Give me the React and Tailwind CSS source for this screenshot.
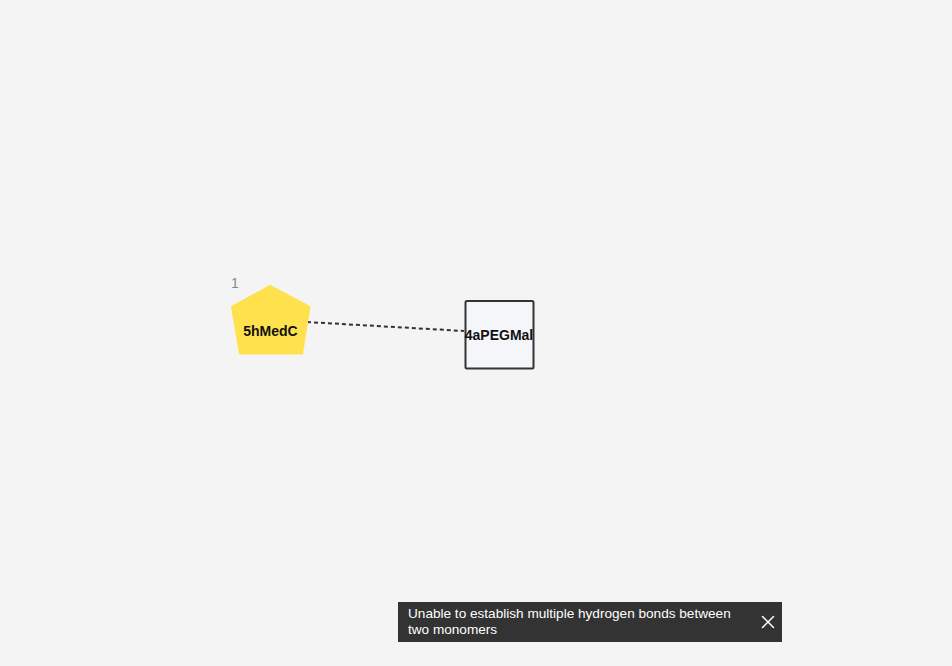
import React from "react";
import { X } from "lucide-react";

export default function App() {
  return (
    <div className="relative w-[952px] h-[666px] bg-[#f4f4f4] overflow-hidden font-[Liberation_Sans,Arial,sans-serif]">
      {/* canvas */}
      <svg className="absolute inset-0" width="952" height="666">
        <line x1="307" y1="322" x2="464" y2="331" stroke="#333" strokeWidth="2" strokeDasharray="4 3" />
        <text x="231" y="288" fontSize="14" fill="#888888" fontFamily="Liberation Sans, Arial, sans-serif">1</text>
        <path
          d="M270 286 L309.5 307 L302 353.5 L240 353.5 L232 307 Z"
          fill="#ffe14d"
          stroke="#ffe14d"
          strokeWidth="2"
          strokeLinejoin="round"
        />
        <text x="270.5" y="336" textAnchor="middle" fontSize="14" fontWeight="bold" fill="#111" fontFamily="Liberation Sans, Arial, sans-serif">5hMedC</text>
        <rect x="465.5" y="301" width="68" height="67.5" rx="1.5" fill="#f5f6fa" stroke="#333" strokeWidth="2" />
        <text x="499" y="340" textAnchor="middle" fontSize="14" fontWeight="bold" fill="#111" fontFamily="Liberation Sans, Arial, sans-serif">4aPEGMal</text>
      </svg>

      {/* toast */}
      <div className="absolute left-[398px] top-[602px] w-[384px] h-[40px] bg-[#333333] flex items-center pl-[10px] pr-[3px]">
        <p className="flex-1 text-white text-[13.6px] leading-[16px] pr-4 font-[Liberation_Sans,Arial,sans-serif]">
          Unable to establish multiple hydrogen bonds between two monomers
        </p>
        <X className="w-[22px] h-[22px] text-white" strokeWidth={1.6} />
      </div>
    </div>
  );
}
